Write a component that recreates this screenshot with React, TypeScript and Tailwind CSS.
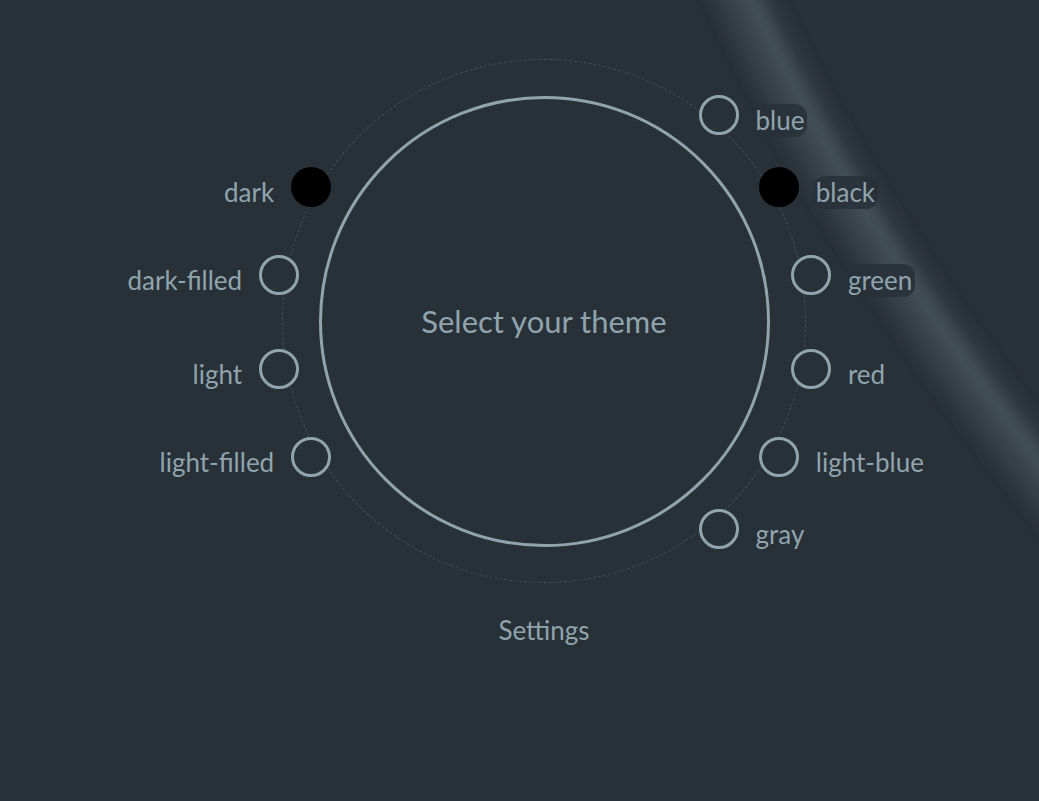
const themes = [
  { name: 'dark', angle: 210, filled: true },
  { name: 'dark-filled', angle: 190, filled: false },
  { name: 'light', angle: 170, filled: false },
  { name: 'light-filled', angle: 150, filled: false },
  { name: 'blue', angle: -50, filled: false },
  { name: 'black', angle: -30, filled: true },
  { name: 'green', angle: -10, filled: false },
  { name: 'red', angle: 10, filled: false },
  { name: 'light-blue', angle: 30, filled: false },
  { name: 'gray', angle: 50, filled: false },
];

const RING = 524;
const ORBIT = 270;

function ThemeNode({ name, angle, filled }: { name: string; angle: number; filled: boolean }) {
  const rad = (angle * Math.PI) / 180;
  const cx = RING / 2 + ORBIT * Math.cos(rad);
  const cy = RING / 2 + ORBIT * Math.sin(rad);
  const left = Math.cos(rad) < 0;

  return (
    <>
      <button
        className={`absolute w-10 h-10 rounded-full cursor-pointer ${
          filled ? 'bg-black' : 'bg-[#283038] border-[3px] border-[#90a4ae]'
        }`}
        style={{ left: cx - 20, top: cy - 20 }}
        aria-label={name}
      />
      <span
        className={`absolute h-[33px] flex items-center px-[3px] rounded-[12px] bg-[#283038]/85 text-[26px] leading-none text-[#90a4ae] whitespace-nowrap ${
          left ? '-translate-x-full' : ''
        }`}
        style={{ left: left ? cx - 34 : cx + 34, top: cy + 5 - 16.5 }}
      >
        {name}
      </span>
    </>
  );
}

export default function App() {
  return (
    <div
      className="relative w-full h-[801px] overflow-hidden bg-[#283038]"
      style={{ fontFamily: 'Lato, "Noto Sans", sans-serif' }}
    >
      {/* light streak */}
      <svg className="absolute inset-0 w-full h-full pointer-events-none" viewBox="0 0 1039 801">
        <defs>
          <filter id="blur" x="-20%" y="-20%" width="140%" height="140%">
            <feGaussianBlur stdDeviation="10" />
          </filter>
          <filter id="blur2" x="-20%" y="-20%" width="140%" height="140%">
            <feGaussianBlur stdDeviation="6" />
          </filter>
        </defs>
        <path
          d="M700 -93 L743 0 Q852 230 1030 460 L1120 577"
          fill="none"
          stroke="#3a454c"
          strokeWidth="46"
          filter="url(#blur)"
        />
        <path
          d="M708 -93 L751 0 Q860 230 1038 460 L1128 577"
          fill="none"
          stroke="#434f56"
          strokeWidth="14"
          filter="url(#blur2)"
        />
      </svg>

      <div className="relative flex flex-col items-center pl-[49px]">
        <div className="relative mt-[59px] w-[524px] h-[524px] rounded-full border border-dashed border-[#465158] flex items-center justify-center">
          <div className="w-[451px] h-[451px] rounded-full border-[3px] border-[#90a4ae] flex items-center justify-center">
            <span className="text-[31px] text-[#90a4ae]">Select your theme</span>
          </div>
          {themes.map((t) => (
            <ThemeNode key={t.name} {...t} />
          ))}
        </div>
        <div className="mt-[28px] text-[26px] text-[#90a4ae]">Settings</div>
      </div>
    </div>
  );
}
